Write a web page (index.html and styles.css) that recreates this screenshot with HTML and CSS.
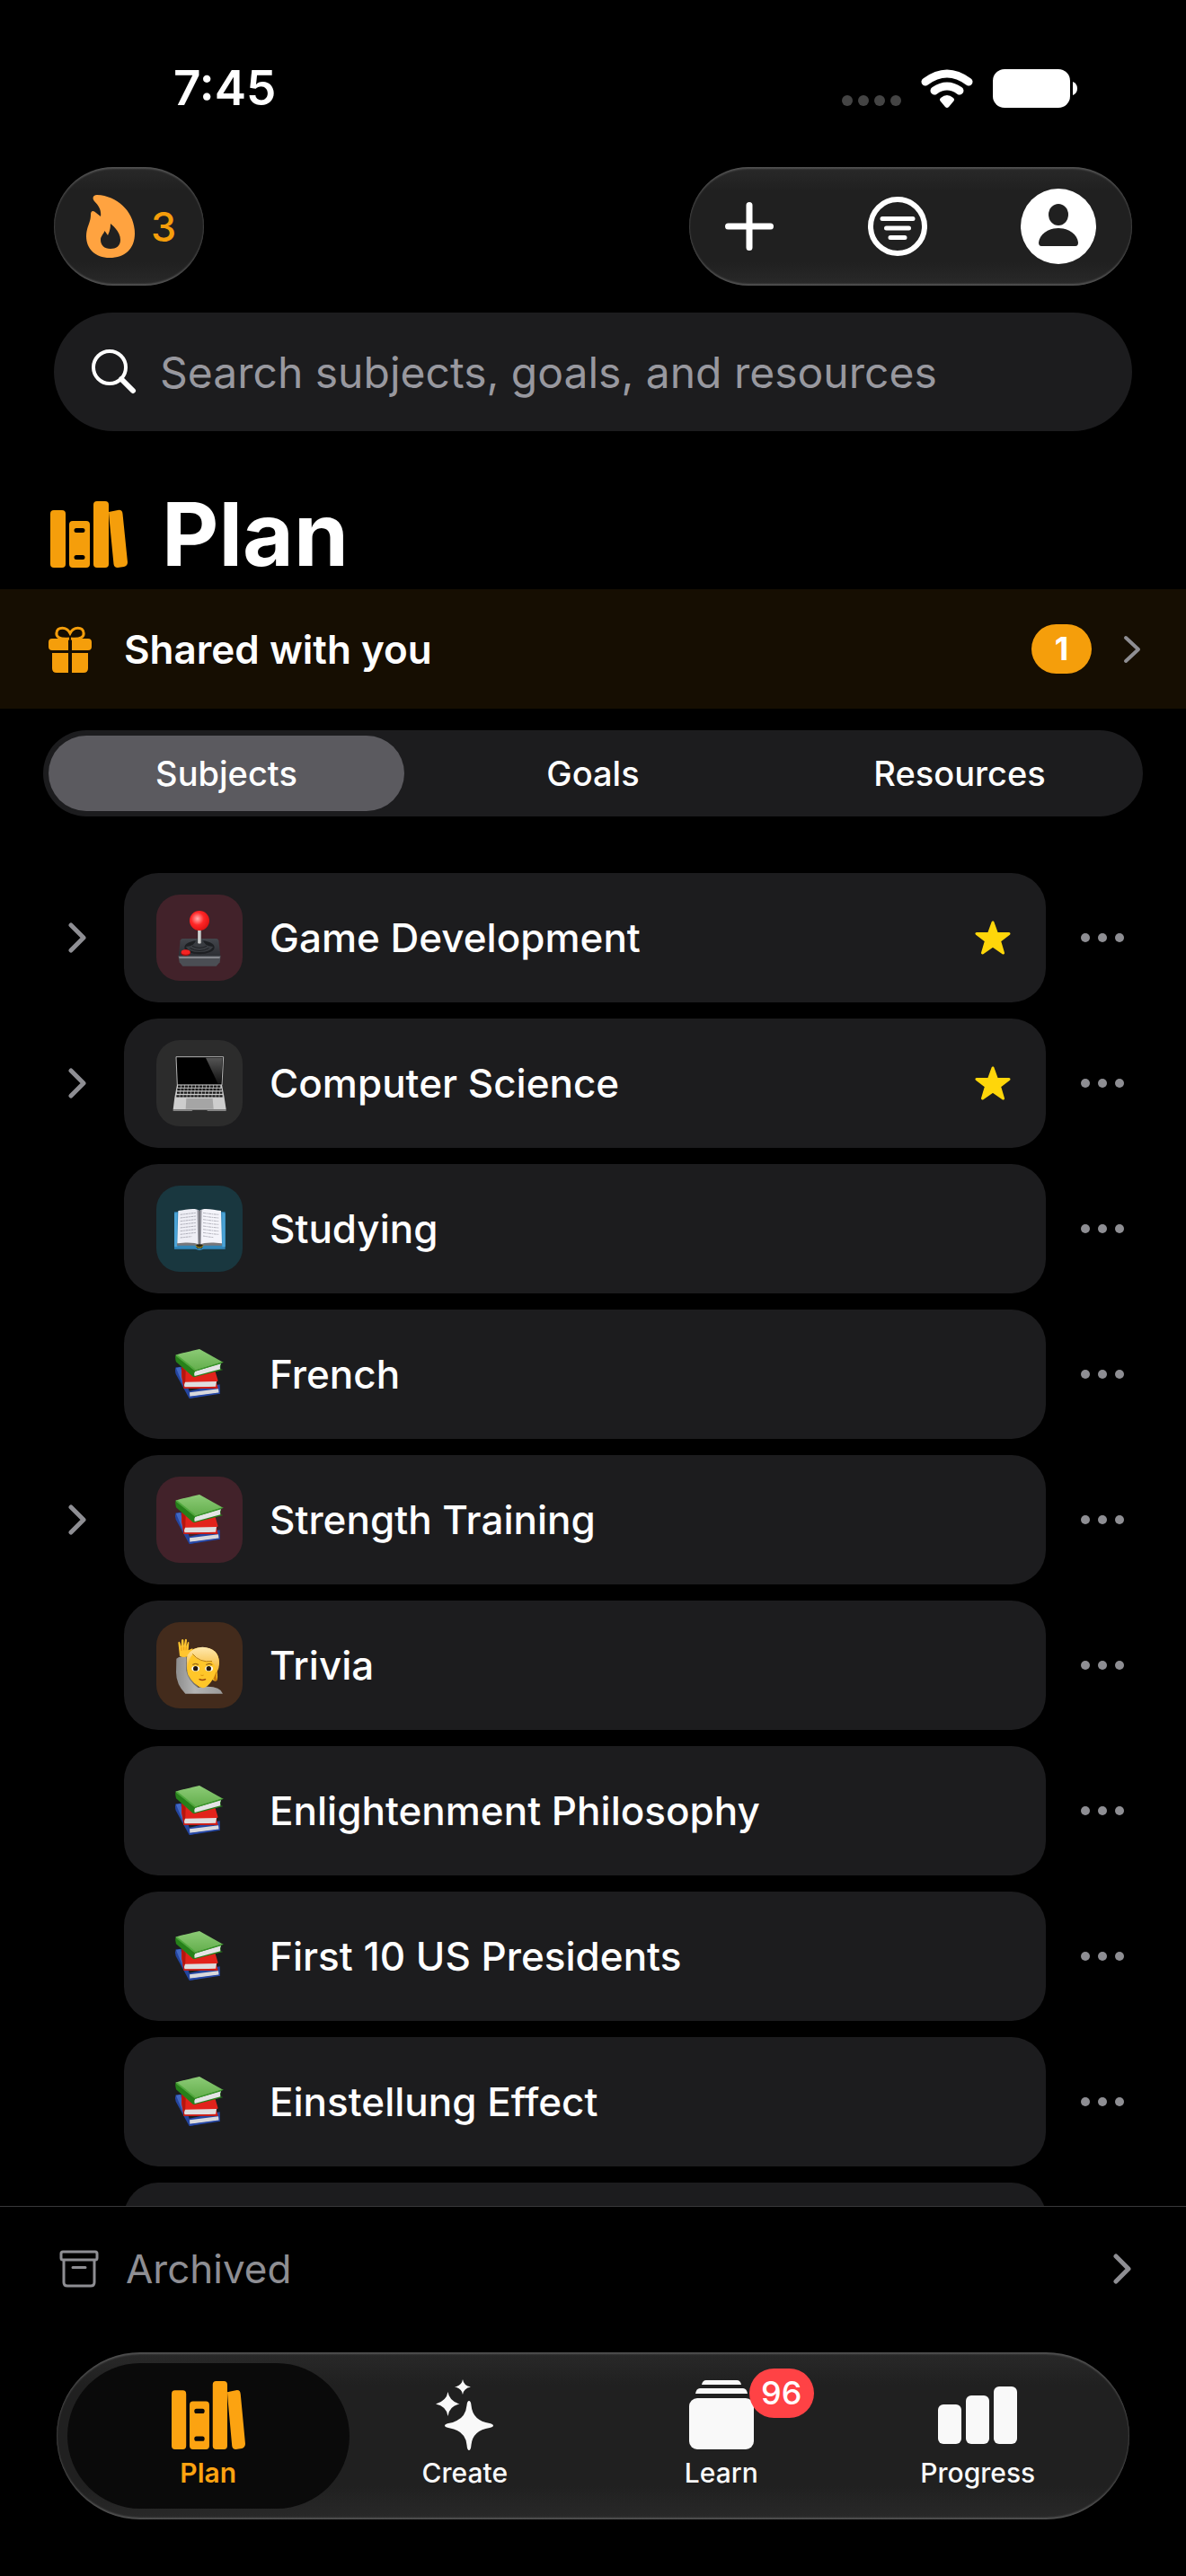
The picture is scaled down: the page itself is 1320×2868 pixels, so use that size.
FILE: index.html
```html
<!DOCTYPE html>
<html lang="en">
<head>
    <meta charset="UTF-8">
    <meta name="viewport" content="width=device-width, initial-scale=1.0">
    <title>Plan</title>
    <link rel="stylesheet" href="styles.css">
</head>
<body>
    <!-- shared icons -->
    <svg class="sprite" aria-hidden="true">
        <defs>
            <radialGradient id="ball" cx="0.4" cy="0.4" r="0.65">
                <stop offset="0" stop-color="#ffb0b0"/>
                <stop offset="0.5" stop-color="#ff2626"/>
                <stop offset="1" stop-color="#dc1212"/>
            </radialGradient>
            <linearGradient id="base" x1="0" y1="0" x2="0" y2="1">
                <stop offset="0" stop-color="#43464c"/>
                <stop offset="1" stop-color="#2c2e33"/>
            </linearGradient>
            <linearGradient id="glare" x1="0" y1="0" x2="0" y2="1">
                <stop offset="0" stop-color="#555"/>
                <stop offset="1" stop-color="#111"/>
            </linearGradient>
            <linearGradient id="green" x1="0" y1="0" x2="0" y2="1">
                <stop offset="0" stop-color="#8ccb76"/>
                <stop offset="1" stop-color="#62ad4b"/>
            </linearGradient>
            <linearGradient id="hair" x1="0" y1="0" x2="0" y2="1">
                <stop offset="0" stop-color="#ffe9b0"/>
                <stop offset="1" stop-color="#f5b427"/>
            </linearGradient>
            <linearGradient id="sleeve" x1="0" y1="0" x2="1" y2="0">
                <stop offset="0" stop-color="#8d8d8d"/>
                <stop offset="0.4" stop-color="#b4b4b4"/>
                <stop offset="1" stop-color="#9a9a9a"/>
            </linearGradient>
        </defs>
        <symbol id="library" viewBox="0 0 86 74" preserveAspectRatio="none">
            <rect x="0" y="10" width="17" height="64" rx="4"/>
            <path fill-rule="evenodd" d="M25 22H40Q44 22 44 26V70Q44 74 40 74H25Q21 74 21 70V26Q21 22 25 22ZM29 30Q26.500 30 26.500 32.500T29 35H36Q38.500 35 38.500 32.500T36 30ZM29 60Q26.500 60 26.500 62.500T29 65H36Q38.500 65 38.500 62.500T36 60Z"/>
            <rect x="48" y="0" width="17" height="74" rx="4"/>
            <path d="M65 12L75 10Q80 9 80.500 14L86 68Q86 72 82 73L75 74Q71 74 70.500 70L66 24Z"/>
        </symbol>
        <symbol id="chevron" viewBox="0 0 20 34">
            <path d="M3 3L17 17L3 31" fill="none" stroke="currentColor" stroke-width="5" stroke-linecap="round" stroke-linejoin="round"/>
        </symbol>
        <symbol id="star" viewBox="0 0 40 38">
            <path d="M20 2L24.500 14.500H38L27.500 22.500L31.500 36L20 28L8.500 36L12.500 22.500L2 14.500H15.500Z" fill="#ffd60a" stroke="#ffd60a" stroke-width="3" stroke-linejoin="round"/>
        </symbol>
        <symbol id="dots" viewBox="0 0 48 10">
            <circle cx="5" cy="5" r="5"/><circle cx="24" cy="5" r="5"/><circle cx="43" cy="5" r="5"/>
        </symbol>
        <symbol id="joystick" viewBox="0 0 288 288">
            <path d="M88 147H200Q206 147 208 154L214 206H74L80 154Q82 147 88 147Z" fill="url(#base)"/>
            <path d="M73 204H215L212 226L200 239H88L77 226Z" fill="#4b4e54"/>
            <path d="M75 208H213L211 213H77Z" fill="#8b8e93"/>
            <ellipse cx="144" cy="176" rx="50" ry="23" fill="#1d1f22"/>
            <path d="M98 174Q130 170 132 152Q144 144 156 152Q158 170 190 174Q180 192 144 192T98 174Z" fill="#393c41"/>
            <path d="M112 179Q144 196 176 179M120 172Q144 184 168 172" fill="none" stroke="#1f2124" stroke-width="3"/>
            <rect x="138" y="116" width="12" height="48" rx="4" fill="#a9a9a9"/>
            <rect x="141" y="116" width="4" height="46" fill="#e3e3e3"/>
            <circle cx="144" cy="87" r="33" fill="url(#ball)"/>
            <ellipse cx="98" cy="195" rx="16" ry="10" fill="#a80d0d"/>
            <ellipse cx="98" cy="192" rx="15" ry="8" fill="#f42323"/>
        </symbol>
        <symbol id="laptop" viewBox="0 0 288 288">
            <path d="M66 56H224L219 150H70Z" fill="#000" stroke="#b5b5b5" stroke-width="3" stroke-linejoin="round"/>
            <path d="M165 59H221L216 144L206 146Z" fill="url(#glare)"/>
            <path d="M69 149H219L227 192H61Z" fill="#c9c9c9"/>
            <path d="M72 155H216M70 165H218M69 176H220M67 187H222" stroke="#161616" stroke-width="7" stroke-dasharray="10 2"/>
            <path d="M61 192H227L233 232H56Z" fill="#cdcdcd"/>
            <path d="M100 195H188L191 230H98Z" fill="#a5a5a5"/>
            <path d="M56 232H233V237H172L168 234H122L118 237H56Z" fill="#888"/>
        </symbol>
        <symbol id="openbook" viewBox="0 0 288 288">
            <path d="M60 88H230V212H158L144 216L130 212H60Z" fill="#3286b8"/>
            <path d="M60 92L70 90V204H60ZM220 90L230 92V204H220Z" fill="#4ba3d5"/>
            <path d="M69 190L144 182L219 190V200H156L144 206L132 200H69Z" fill="#77777a"/>
            <path d="M73 84C96 82 130 72 143 84V198C130 190 104 189 70 193Z" fill="#eeeef5"/>
            <path d="M216 84C192 82 158 72 145 84V198C158 190 184 189 219 193Z" fill="#f4f4fa"/>
            <path d="M136 80L144 84L152 80L149 198L144 202L139 198Z" fill="#9d9da6"/>
            <path d="M144 84V200" stroke="#58585e" stroke-width="3"/>
            <path d="M80 97Q105 94 132 91M80 108Q105 105 132 102M80 119Q105 116 132 113M80 130Q105 127 132 124M80 141Q105 138 132 135M80 152Q105 149 132 146M80 163Q105 160 132 157M80 174Q98 172 118 170M156 91Q182 95 208 97M156 102Q182 106 208 108M156 113Q182 117 208 119M156 124Q182 128 208 130M156 135Q182 139 208 141M156 146Q182 150 208 152M156 157Q182 161 208 163M156 168Q172 171 192 173" fill="none" stroke="#8e8e9a" stroke-width="2" stroke-dasharray="9 2 5 2"/>
            <path d="M131 200Q144 192 157 200L152 209H136Z" fill="#2a2410"/>
            <path d="M131 200Q144 214 157 200" fill="none" stroke="#b59a1c" stroke-width="3"/>
        </symbol>
        <symbol id="books" viewBox="0 0 288 288">
            <path d="M65 121L84 119L110 200L212 178L213 205L110 225L107 220L65 143Q61 130 65 121Z" fill="#24459f"/>
            <path d="M66 124L80 120L104 190L92 186Z" fill="#4268c2"/>
            <path d="M111 205L207 193L209 207L112 219Z" fill="#d8d8dc"/>
            <path d="M111 218L213 205V209L111 225Z" fill="#2547a6"/>
            <path d="M84 115L196 132L206 166L200 170L205 188V191H92L84 150Z" fill="#e2231b"/>
            <path d="M84 115L98 132L96 190H91Q84 155 84 115Z" fill="#b5160f"/>
            <path d="M96 170L201 168L198 185L95 188Q91 178 96 170Z" fill="#dededf"/>
            <path d="M91 187L205 187V191H91Z" fill="#c91b14"/>
            <path d="M64 80Q74 76 144 60L223 104L128 133Z" fill="url(#green)"/>
            <path d="M64 80L128 132L216 105L214 127L223 129L126 154L122 152L66 103Q62 90 64 80Z" fill="#26801a"/>
            <path d="M130 134L216 109Q210 118 214 127L128 150Q124 141 130 134Z" fill="#e4e4e5"/>
            <path d="M128 131L223 102V105L128 135Z" fill="#3b972c"/>
            <path d="M67 81L128 129" stroke="#4fa83d" stroke-width="5"/>
        </symbol>
        <symbol id="raisedhand" viewBox="0 0 288 288">
            <path d="M67 122Q78 110 103 117L101 157Q108 194 140 218Q210 208 222 239H97Q66 208 66 168Z" fill="url(#sleeve)"/>
            <path d="M101 117L101 160Q108 194 138 216" fill="none" stroke="#757575" stroke-width="4"/>
            <path d="M78 113L73 68Q76 62 79 68L83 82L84 60Q88 54 91 60L92 80L96 58Q100 54 102 60L100 82L105 67Q109 64 109 70L107 94L120 88Q124 90 116 102L106 114Q92 120 78 113Z" fill="#ffc530"/>
            <path d="M84 83V96M92 82V94M100 82L99 94" stroke="#da8d0c" stroke-width="2"/>
            <path d="M102 132Q100 86 152 84Q210 86 210 136L203 165Q206 186 202 194Q195 200 188 192Q170 220 155 220Q125 212 106 176Q100 158 102 132Z" fill="#ffc629"/>
            <path d="M203 160L190 190Q196 200 203 194Q198 180 203 160Z" fill="#c97b08"/>
            <path d="M104 110Q120 84 154 83Q209 85 210 138Q210 155 202 168Q200 145 185 132Q144 138 121 108Q105 126 104 155Q99 126 104 110Z" fill="url(#hair)"/>
            <path d="M121 106Q144 136 186 131" fill="none" stroke="#b67b0c" stroke-width="3"/>
            <path d="M121 142Q130 136 141 142M166 142Q178 136 187 142" fill="none" stroke="#7c4b0c" stroke-width="3"/>
            <ellipse cx="131" cy="155" rx="13" ry="9" fill="#fff"/><ellipse cx="176" cy="155" rx="13" ry="9" fill="#fff"/>
            <circle cx="131" cy="155" r="8" fill="#24180c"/><circle cx="175" cy="155" r="8" fill="#24180c"/>
            <path d="M148 177Q153 180 158 177" fill="none" stroke="#dc9310" stroke-width="3"/>
            <path d="M144 191Q153 196 164 191" fill="none" stroke="#9b450c" stroke-width="4" stroke-linecap="round"/>
        </symbol>
    </svg>

    <div class="app">
        <div class="status-bar">
            <span class="time">7:45</span>
            <div class="status-icons">
                <svg class="signal" viewBox="0 0 66 12"><circle cx="6" cy="6" r="6"/><circle cx="24" cy="6" r="6"/><circle cx="42" cy="6" r="6"/><circle cx="60" cy="6" r="6"/></svg>
                <svg class="wifi" viewBox="0 0 58 43">
                    <path d="M5 14Q29 -4 53 14" fill="none" stroke="#fff" stroke-width="9" stroke-linecap="round"/>
                    <path d="M15 24Q29 14 43 24" fill="none" stroke="#fff" stroke-width="9" stroke-linecap="round"/>
                    <path d="M22 32Q29 26 36 32Q38 34 36 36L31 42Q29 44 27 42L22 36Q20 34 22 32Z" fill="#fff"/>
                </svg>
                <svg class="battery" viewBox="0 0 94 43">
                    <rect width="86" height="43" rx="13" fill="#fff"/>
                    <path d="M89 14Q94 16 94 21.500T89 29Z" fill="#fff"/>
                </svg>
            </div>
        </div>

        <header class="toolbar">
            <button class="glass streak" type="button">
                <svg class="flame" viewBox="0 0 54 70">
                    <path fill="#ffa340" fill-rule="evenodd" d="M12 0C36 1 54 20 54 43C54 60 43 70 26 70C10 70 0 60 0 46C0 36 5 31 5 22C5 17 8 17 11 20L16 24C17 17 14 12 9 7C6 3 8 0 12 0ZM27 32C33 37 38 43 38 50C38 57 33 60 27 60C20 60 16 56 16 50C16 46 19 44 20.500 40L24 45C26 41 27 37 27 32Z"/>
                </svg>
                <span>3</span>
            </button>
            <div class="glass actions">
                <button type="button" aria-label="Add">
                    <svg class="plus" viewBox="0 0 54 54"><path d="M27 3.500V50.500M3.500 27H50.500" stroke="#fff" stroke-width="7" stroke-linecap="round"/></svg>
                </button>
                <button type="button" aria-label="Filter">
                    <svg class="filter" viewBox="0 0 66 66" fill="none" stroke="#fff">
                        <circle cx="33" cy="33" r="30" stroke-width="6"/>
                        <path d="M16 24.500H50M20.500 35H45.500M25 45.500H41" stroke-width="5" stroke-linecap="round"/>
                    </svg>
                </button>
                <button type="button" aria-label="Account">
                    <svg class="person" viewBox="0 0 84 84">
                        <circle cx="42" cy="42" r="42" fill="#fff"/>
                        <ellipse cx="42" cy="29" rx="11" ry="12" fill="#202020"/>
                        <path d="M20 60C21 51 30 44 42 44S63 51 64 60Q64 64 61 64H23Q20 64 20 60Z" fill="#202020"/>
                    </svg>
                </button>
            </div>
        </header>

        <label class="search">
            <svg class="lens" viewBox="0 0 50 50" fill="none" stroke="#fff" stroke-linecap="round">
                <circle cx="20" cy="20" r="18" stroke-width="4"/>
                <path d="M33 33L46 46" stroke-width="6"/>
            </svg>
            <input type="search" aria-label="Search" placeholder="Search subjects, goals, and resources">
        </label>

        <h1 class="title">
            <svg class="title-icon"><use href="#library"/></svg>
            Plan
        </h1>

        <a class="shared" href="#">
            <svg class="gift" viewBox="0 0 48 52">
                <path d="M23 14C12 15 8 12 9 7C10 1 20 0 24 8C28 0 38 1 39 7C40 12 36 15 25 14" fill="none" stroke="currentColor" stroke-width="3"/>
                <path d="M4 14H22V27H4Q0 27 0 23V18Q0 14 4 14ZM26 14H44Q48 14 48 18V23Q48 27 44 27H26ZM4 30H22V52H9Q4 52 4 47ZM26 30H44V47Q44 52 39 52H26Z" fill="currentColor"/>
            </svg>
            <span class="shared-text">Shared with you</span>
            <span class="count">1</span>
            <svg class="chevron thin" viewBox="0 0 20 34"><path d="M3 4L17 17L3 30" fill="none" stroke="currentColor" stroke-width="4" stroke-linecap="round" stroke-linejoin="round"/></svg>
        </a>

        <div class="segments">
            <button class="segment selected" type="button">Subjects</button>
            <button class="segment" type="button">Goals</button>
            <button class="segment" type="button">Resources</button>
        </div>

        <main class="subjects">
            <div class="row">
                <button class="expand" type="button" aria-label="Expand"><svg class="chevron"><use href="#chevron"/></svg></button>
                <a class="card" href="#">
                    <svg class="tile red"><use href="#joystick"/></svg>
                    <span class="name">Game Development</span>
                    <svg class="star"><use href="#star"/></svg>
                </a>
                <button class="more" type="button" aria-label="More"><svg><use href="#dots"/></svg></button>
            </div>
            <div class="row">
                <button class="expand" type="button" aria-label="Expand"><svg class="chevron"><use href="#chevron"/></svg></button>
                <a class="card" href="#">
                    <svg class="tile gray"><use href="#laptop"/></svg>
                    <span class="name">Computer Science</span>
                    <svg class="star"><use href="#star"/></svg>
                </a>
                <button class="more" type="button" aria-label="More"><svg><use href="#dots"/></svg></button>
            </div>
            <div class="row">
                <a class="card" href="#">
                    <svg class="tile teal"><use href="#openbook"/></svg>
                    <span class="name">Studying</span>
                </a>
                <button class="more" type="button" aria-label="More"><svg><use href="#dots"/></svg></button>
            </div>
            <div class="row">
                <a class="card" href="#">
                    <svg class="tile"><use href="#books"/></svg>
                    <span class="name">French</span>
                </a>
                <button class="more" type="button" aria-label="More"><svg><use href="#dots"/></svg></button>
            </div>
            <div class="row">
                <button class="expand" type="button" aria-label="Expand"><svg class="chevron"><use href="#chevron"/></svg></button>
                <a class="card" href="#">
                    <svg class="tile red"><use href="#books"/></svg>
                    <span class="name">Strength Training</span>
                </a>
                <button class="more" type="button" aria-label="More"><svg><use href="#dots"/></svg></button>
            </div>
            <div class="row">
                <a class="card" href="#">
                    <svg class="tile brown"><use href="#raisedhand"/></svg>
                    <span class="name">Trivia</span>
                </a>
                <button class="more" type="button" aria-label="More"><svg><use href="#dots"/></svg></button>
            </div>
            <div class="row">
                <a class="card" href="#">
                    <svg class="tile"><use href="#books"/></svg>
                    <span class="name">Enlightenment Philosophy</span>
                </a>
                <button class="more" type="button" aria-label="More"><svg><use href="#dots"/></svg></button>
            </div>
            <div class="row">
                <a class="card" href="#">
                    <svg class="tile"><use href="#books"/></svg>
                    <span class="name">First 10 US Presidents</span>
                </a>
                <button class="more" type="button" aria-label="More"><svg><use href="#dots"/></svg></button>
            </div>
            <div class="row">
                <a class="card" href="#">
                    <svg class="tile"><use href="#books"/></svg>
                    <span class="name">Einstellung Effect</span>
                </a>
                <button class="more" type="button" aria-label="More"><svg><use href="#dots"/></svg></button>
            </div>
            <div class="row">
                <div class="card"></div>
            </div>
        </main>

        <a class="archived" href="#">
            <svg class="box" viewBox="0 0 44 42" fill="none" stroke="currentColor" stroke-width="3" stroke-linejoin="round" stroke-linecap="round">
                <rect x="2" y="2" width="40" height="9" rx="2"/>
                <path d="M5 12V36Q5 40 9 40H35Q39 40 39 36V12M15 19.500H29"/>
            </svg>
            <span class="archived-text">Archived</span>
            <svg class="chevron"><use href="#chevron"/></svg>
        </a>

        <nav class="glass tabs">
            <a class="tab active" href="#">
                <span class="tab-icon"><svg class="tab-library"><use href="#library"/></svg></span>
                <span>Plan</span>
            </a>
            <a class="tab" href="#">
                <span class="tab-icon">
                    <svg class="sparkles" viewBox="0 0 64 80">
                        <path d="M37 24Q39 24 39.500 29Q41 46 60 49Q64 50 64 51.500T60 54Q41 57 39.500 73Q39 79 37 79T34.500 73Q33 57 14 54Q10 53 10 51.500T14 49Q33 46 34.500 29Q35 24 37 24Z"/>
                        <path d="M13.500 14Q15 24 26.500 27.500Q15 30 13.500 41Q12 30 0 27.500Q12 24 13.500 14Z"/>
                        <path d="M30 0Q31 7 39 8.500Q31 10 30 17Q29 10 21 8.500Q29 7 30 0Z"/>
                    </svg>
                </span>
                <span>Create</span>
            </a>
            <a class="tab" href="#">
                <span class="tab-icon">
                    <svg class="stack" viewBox="0 0 72 78">
                        <path d="M14 5Q15 0 19 0H53Q57 0 58 5ZM7 15Q8 9 12 9H60Q64 9 65 15Z"/>
                        <rect y="20" width="72" height="57" rx="9"/>
                    </svg>
                    <span class="badge">96</span>
                </span>
                <span>Learn</span>
            </a>
            <a class="tab" href="#">
                <span class="tab-icon">
                    <svg class="bars" viewBox="0 0 88 78">
                        <rect x="0" y="27" width="26" height="44" rx="6"/><rect x="31" y="17" width="26" height="54" rx="6"/><rect x="62" y="7" width="26" height="64" rx="6"/>
                    </svg>
                </span>
                <span>Progress</span>
            </a>
        </nav>
    </div>
</body>
</html>
```
FILE: styles.css
```css
* {
    box-sizing: border-box;
}

body {
    margin: 0;
    background: #000;
    color: #fff;
    font-family: Inter, "Liberation Sans", sans-serif;
}

button {
    padding: 0;
    border: none;
    background: none;
    color: inherit;
    font: inherit;
    cursor: pointer;
}

a {
    color: inherit;
    text-decoration: none;
}

svg {
    display: block;
    flex: none;
}

.sprite {
    position: absolute;
    width: 0;
    height: 0;
}

.app {
    display: flex;
    flex-direction: column;
    height: 100vh;
}

.status-bar {
    display: flex;
    justify-content: space-between;
    align-items: center;
    flex: none;
    height: 186px;
    padding: 10px 121px 0 193px;
}

.time {
    font-size: 53px;
    font-weight: 600;
}

.status-icons {
    display: flex;
    align-items: center;
    gap: 22px;
}

.signal {
    width: 66px;
    height: 12px;
    margin-top: 28px;
    fill: #444;
}

.wifi {
    width: 58px;
    height: 43px;
}

.battery {
    width: 94px;
    height: 43px;
}

.glass {
    border-radius: 96px;
    background: linear-gradient(#292929, #202020 20%, #202020 80%, #292929);
    box-shadow: inset 0 2px 2px rgba(255, 255, 255, 0.2), inset 0 -2px 2px rgba(255, 255, 255, 0.2);
}

.toolbar {
    display: flex;
    justify-content: space-between;
    flex: none;
    padding: 0 60px;
}

.streak {
    display: flex;
    align-items: center;
    gap: 18px;
    height: 132px;
    padding: 0 31px 0 36px;
    color: #f59e0b;
    font-size: 45px;
    font-weight: 500;
}

.flame {
    width: 54px;
    height: 70px;
}

.actions {
    display: flex;
    align-items: center;
    justify-content: space-between;
    width: 493px;
    padding: 0 40px;
}

.plus {
    width: 54px;
    height: 54px;
}

.filter {
    width: 66px;
    height: 66px;
}

.person {
    width: 84px;
    height: 84px;
}

.search {
    display: flex;
    align-items: center;
    flex: none;
    gap: 26px;
    height: 132px;
    margin: 30px 60px 0;
    padding: 0 42px;
    border-radius: 66px;
    background: #1c1c1e;
}

.lens {
    width: 50px;
    height: 50px;
}

.search input {
    flex: 1;
    min-width: 0;
    padding: 0;
    border: none;
    outline: none;
    background: none;
    color: #fff;
    font: inherit;
    font-size: 48px;
}

.search input::placeholder {
    color: #98989f;
    opacity: 1;
}

.title {
    display: flex;
    align-items: center;
    flex: none;
    gap: 38px;
    height: 176px;
    margin: 0;
    padding: 54px 56px 0;
    font-size: 98px;
    line-height: 120px;
    font-weight: 700;
}

.title-icon {
    width: 86px;
    height: 74px;
    fill: #f59e0b;
}

.shared {
    display: flex;
    align-items: center;
    flex: none;
    height: 133px;
    padding: 0 50px 0 54px;
    background: #160e02;
}

.gift {
    width: 48px;
    height: 52px;
    color: #f59e0b;
}

.shared-text {
    flex: 1;
    margin-left: 36px;
    font-size: 44px;
    font-weight: 600;
}

.count {
    min-width: 67px;
    border-radius: 28px;
    background: #f59e0b;
    font-size: 36px;
    line-height: 55px;
    font-weight: 700;
    text-align: center;
}

.chevron {
    width: 20px;
    height: 34px;
    color: #8e8e93;
}

.thin {
    margin-left: 35px;
}

.segments {
    display: flex;
    flex: none;
    height: 96px;
    margin: 24px 48px 0;
    padding: 6px 0;
    border-radius: 48px;
    background: #1c1c1e;
}

.segment {
    flex: 1;
    margin: 0 6px;
    border-radius: 42px;
    font-size: 38px;
    font-weight: 500;
}

.segment.selected {
    background: #5b5a5f;
}

.subjects {
    display: flex;
    flex-direction: column;
    flex: 1;
    gap: 18px;
    min-height: 0;
    padding: 63px 30px 0 34px;
    overflow: hidden;
}

.row {
    display: grid;
    grid-template-columns: 104px 1fr 126px;
    flex: none;
}

.expand,
.more {
    display: flex;
    align-items: center;
    justify-content: center;
}

.card {
    grid-column: 2;
    display: flex;
    align-items: center;
    min-height: 144px;
    padding: 0 39px 0 36px;
    border-radius: 38px;
    background: #1c1c1e;
}

.tile {
    width: 96px;
    height: 96px;
    border-radius: 26px;
}

.red {
    background: #42222a;
}

.gray {
    background: #2c2c2c;
}

.teal {
    background: #19373f;
}

.brown {
    background: #432b1c;
}

.name {
    flex: 1;
    margin-left: 30px;
    font-size: 44px;
    font-weight: 500;
}

.star {
    width: 40px;
    height: 38px;
}

.more svg {
    width: 48px;
    height: 10px;
    fill: #8e8e93;
}

.archived {
    display: flex;
    align-items: center;
    flex: none;
    height: 139px;
    padding: 0 61px 0 66px;
    border-top: 1px solid #38383a;
    color: #8e8e93;
    font-size: 44px;
}

.box {
    width: 44px;
    height: 42px;
}

.archived-text {
    flex: 1;
    margin-left: 30px;
}

.tabs {
    display: flex;
    flex: none;
    height: 186px;
    margin: 24px 63px 63px;
    padding: 12px 26px;
}

.tab {
    position: relative;
    z-index: 0;
    display: flex;
    flex: 1;
    flex-direction: column;
    align-items: center;
    gap: 8px;
    padding-top: 20px;
    color: #f9f9f9;
    font-size: 30px;
    line-height: 36px;
    font-weight: 500;
}

.tab svg {
    fill: currentColor;
}

.tab.active {
    color: #fca311;
    font-weight: 600;
}

/* pill behind the current tab, wider than its column */
.tab.active::before {
    content: "";
    position: absolute;
    z-index: -1;
    inset: 0 -14px;
    border-radius: 81px;
    background: #0a0a0a;
}

.tab-icon {
    position: relative;
    display: flex;
    align-items: center;
    height: 76px;
}

.tab-library {
    width: 82px;
    height: 76px;
}

.sparkles {
    width: 64px;
    height: 80px;
}

.stack {
    width: 72px;
    height: 78px;
}

.bars {
    width: 88px;
    height: 78px;
}

.badge {
    position: absolute;
    top: -14px;
    left: 67px;
    width: 72px;
    border-radius: 28px;
    background: #ff4245;
    color: #fff;
    font-size: 36px;
    line-height: 55px;
    font-weight: 500;
    text-align: center;
}
```
